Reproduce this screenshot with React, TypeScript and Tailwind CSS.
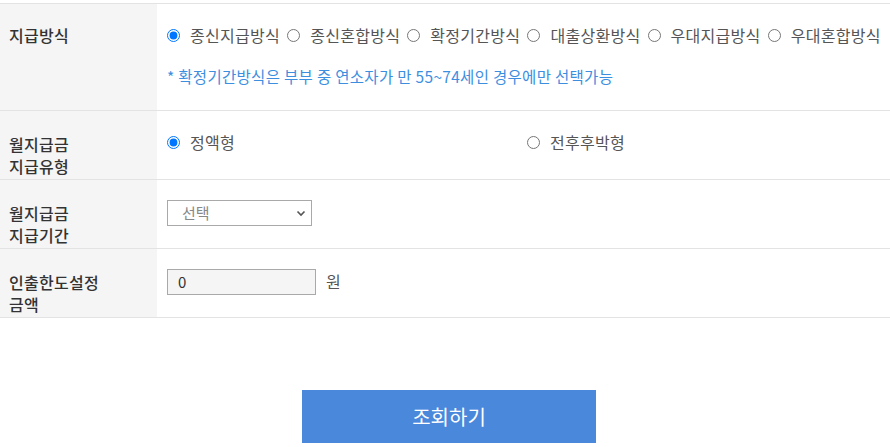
import React from "react";

const font = { fontFamily: '"Noto Sans CJK KR", "Noto Sans", sans-serif' };

function Radio({ checked }: { checked?: boolean }) {
  return (
    <input
      type="radio"
      readOnly
      checked={!!checked}
      className="m-0 h-[13px] w-[13px] shrink-0 accent-[#0075ff]"
    />
  );
}

function Opt({ label, checked }: { label: string; checked?: boolean }) {
  return (
    <label className="mr-[7px] flex items-center">
      <Radio checked={checked} />
      <span className="ml-[10px]">{label}</span>
    </label>
  );
}

export default function App() {
  const opts = ["종신지급방식", "종신혼합방식", "확정기간방식", "대출상환방식", "우대지급방식", "우대혼합방식"];
  return (
    <div className="w-[890px] h-[447px] overflow-hidden bg-white" style={font}>
      <div className="h-[3px]" />
      <div className="border-t border-[#e3e3e3]">
        {/* Row 1 */}
        <div className="flex h-[107px] border-b border-[#e3e3e3]">
          <div className="w-[157px] shrink-0 bg-[#f5f5f5] pl-[9px] pt-[20px] text-[16px] leading-[22px] font-medium text-[#333] tracking-[0.3px]">
            지급방식
          </div>
          <div className="pl-[10px] pt-[20px]">
            <div className="flex items-center whitespace-nowrap text-[16px] leading-[22px] text-[#555] tracking-[0.3px]">
              {opts.map((o, i) => (
                <Opt key={o} label={o} checked={i === 0} />
              ))}
            </div>
            <div className="mt-[20px] text-[15.5px] leading-[20px] tracking-[0.3px] text-[#3c8fdf] whitespace-nowrap">
              * 확정기간방식은 부부 중 연소자가 만 55~74세인 경우에만 선택가능
            </div>
          </div>
        </div>
        {/* Row 2 */}
        <div className="flex h-[69px] border-b border-[#e3e3e3]">
          <div className="w-[157px] shrink-0 bg-[#f5f5f5] pl-[9px] pt-[22px] text-[16px] leading-[22px] font-medium text-[#333] tracking-[0.3px]">
            월지급금
            <br />
            지급유형
          </div>
          <div className="flex pl-[10px] pt-[20px] text-[16px] leading-[22px] text-[#555] tracking-[0.3px]">
            <div className="w-[360px]">
              <Opt label="정액형" checked />
            </div>
            <div>
              <Opt label="전후후박형" />
            </div>
          </div>
        </div>
        {/* Row 3 */}
        <div className="flex h-[69px] border-b border-[#e3e3e3]">
          <div className="w-[157px] shrink-0 bg-[#f5f5f5] pl-[9px] pt-[22px] text-[16px] leading-[22px] font-medium text-[#333] tracking-[0.3px]">
            월지급금
            <br />
            지급기간
          </div>
          <div className="pl-[10px] pt-[20px]">
            <div className="relative h-[26px] w-[145px] border border-[#a9a9a9] bg-white">
              <div className="pl-[14px] text-[15px] leading-[24px] text-[#888]">선택</div>
              <svg className="absolute right-[5px] top-[9px]" width="10" height="7" viewBox="0 0 10 7">
                <path d="M1.5 1.5 L5 5 L8.5 1.5" fill="none" stroke="#555" strokeWidth="1.6" />
              </svg>
            </div>
          </div>
        </div>
        {/* Row 4 */}
        <div className="flex h-[69px] border-b border-[#e3e3e3]">
          <div className="w-[157px] shrink-0 bg-[#f5f5f5] pl-[9px] pt-[22px] text-[16px] leading-[22px] font-medium text-[#333] tracking-[0.3px]">
            인출한도설정
            <br />
            금액
          </div>
          <div className="flex items-start pl-[10px] pt-[20px]">
            <div className="h-[26px] w-[149px] border border-[#a9a9a9] bg-[#f5f5f5] pl-[10px] text-[15px] leading-[24px] text-[#333]">
              0
            </div>
            <span className="ml-[10px] text-[16px] leading-[24px] text-[#555]">원</span>
          </div>
        </div>
      </div>
      <div className="flex justify-center pl-[8px] pt-[72px]">
        <button className="h-[53px] w-[294px] bg-[#4a88dc] text-[20px] text-white">조회하기</button>
      </div>
    </div>
  );
}
